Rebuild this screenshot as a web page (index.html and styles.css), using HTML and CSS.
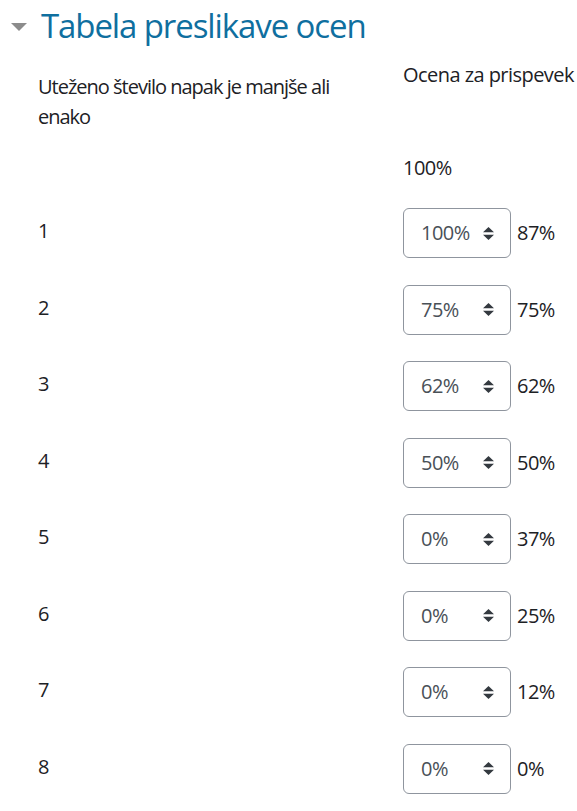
FILE: index.html
```html
<!DOCTYPE html>
<html lang="sl">
<head>
<meta charset="utf-8">
<title>Tabela preslikave ocen</title>
<link rel="stylesheet" href="styles.css">
</head>
<body>
<fieldset class="section">
  <legend class="section-head">
    <span class="caret"></span>
    <span class="section-title">Tabela preslikave ocen</span>
  </legend>

  <div class="row row-head">
    <div class="label label-head">Uteženo število napak je manjše ali enako</div>
    <div class="field field-static">Ocena za prispevek</div>
  </div>

  <div class="row row-zero">
    <div class="label"></div>
    <div class="field field-static">100%</div>
  </div>

  <div class="row row-item">
    <div class="label">1</div>
    <div class="field"><div class="select"><span class="value">100%</span><svg class="updown" viewBox="0 0 11 13"><path d="M5.5 0 L11 5.3 L0 5.3 Z M0 7.7 L11 7.7 L5.5 13 Z"/></svg></div><span class="calc">87%</span></div>
  </div>
  <div class="row row-item">
    <div class="label">2</div>
    <div class="field"><div class="select"><span class="value">75%</span><svg class="updown" viewBox="0 0 11 13"><path d="M5.5 0 L11 5.3 L0 5.3 Z M0 7.7 L11 7.7 L5.5 13 Z"/></svg></div><span class="calc">75%</span></div>
  </div>
  <div class="row row-item">
    <div class="label">3</div>
    <div class="field"><div class="select"><span class="value">62%</span><svg class="updown" viewBox="0 0 11 13"><path d="M5.5 0 L11 5.3 L0 5.3 Z M0 7.7 L11 7.7 L5.5 13 Z"/></svg></div><span class="calc">62%</span></div>
  </div>
  <div class="row row-item">
    <div class="label">4</div>
    <div class="field"><div class="select"><span class="value">50%</span><svg class="updown" viewBox="0 0 11 13"><path d="M5.5 0 L11 5.3 L0 5.3 Z M0 7.7 L11 7.7 L5.5 13 Z"/></svg></div><span class="calc">50%</span></div>
  </div>
  <div class="row row-item">
    <div class="label">5</div>
    <div class="field"><div class="select"><span class="value">0%</span><svg class="updown" viewBox="0 0 11 13"><path d="M5.5 0 L11 5.3 L0 5.3 Z M0 7.7 L11 7.7 L5.5 13 Z"/></svg></div><span class="calc">37%</span></div>
  </div>
  <div class="row row-item">
    <div class="label">6</div>
    <div class="field"><div class="select"><span class="value">0%</span><svg class="updown" viewBox="0 0 11 13"><path d="M5.5 0 L11 5.3 L0 5.3 Z M0 7.7 L11 7.7 L5.5 13 Z"/></svg></div><span class="calc">25%</span></div>
  </div>
  <div class="row row-item">
    <div class="label">7</div>
    <div class="field"><div class="select"><span class="value">0%</span><svg class="updown" viewBox="0 0 11 13"><path d="M5.5 0 L11 5.3 L0 5.3 Z M0 7.7 L11 7.7 L5.5 13 Z"/></svg></div><span class="calc">12%</span></div>
  </div>
  <div class="row row-item">
    <div class="label">8</div>
    <div class="field"><div class="select"><span class="value">0%</span><svg class="updown" viewBox="0 0 11 13"><path d="M5.5 0 L11 5.3 L0 5.3 Z M0 7.7 L11 7.7 L5.5 13 Z"/></svg></div><span class="calc">0%</span></div>
  </div>
</fieldset>
</body>
</html>
```

FILE: styles.css
```css
html, body {
  margin: 0;
  padding: 0;
  background: #ffffff;
}

body {
  font-family: "Open Sans", "Noto Sans", sans-serif;
  font-size: 20px;
  line-height: 30px;
  color: #1d2125;
  overflow: hidden;
}

.section {
  margin: 0;
  padding: 0;
  border: 0;
  min-width: 0;
}

.section-head {
  display: flex;
  align-items: center;
  padding: 0;
  height: 52px;
  margin: 0 0 8px 0;
  float: left;
  width: 100%;
}

.caret {
  width: 0;
  height: 0;
  margin-left: 11px;
  margin-top: 2px;
  border-left: 8px solid transparent;
  border-right: 8px solid transparent;
  border-top: 8px solid #8c8c8c;
}

.section-title {
  margin-left: 14px;
  font-size: 33px;
  line-height: 52px;
  color: #0f6f9f;
  letter-spacing: -1.1px;
}

.row {
  clear: both;
  display: flex;
  align-items: flex-start;
  padding-left: 38px;
}

.label {
  width: 365px;
  flex: none;
  padding-right: 30px;
  box-sizing: border-box;
  letter-spacing: -1px;
}

.field {
  display: flex;
  align-items: center;
  gap: 6px;
  white-space: nowrap;
  letter-spacing: -0.55px;
}

.row-head .label {
  padding-top: 12px;
}

.row-head {
  margin-bottom: 21px;
}

.row-zero {
  margin-bottom: 25px;
}

.row-item {
  margin-bottom: 26.57px;
}

.row-item .label {
  padding-top: 8px;
}

.select {
  width: 108px;
  height: 50px;
  box-sizing: border-box;
  border: 1px solid #8f959e;
  border-radius: 6px;
  display: flex;
  align-items: center;
  padding-left: 17px;
  padding-right: 16px;
  color: #495057;
  background: #fff;
}

.value {
  flex: 1;
}

.updown {
  width: 11px;
  height: 13px;
  fill: #343a40;
  flex: none;
}

.calc {
  color: #1d2125;
}
```
